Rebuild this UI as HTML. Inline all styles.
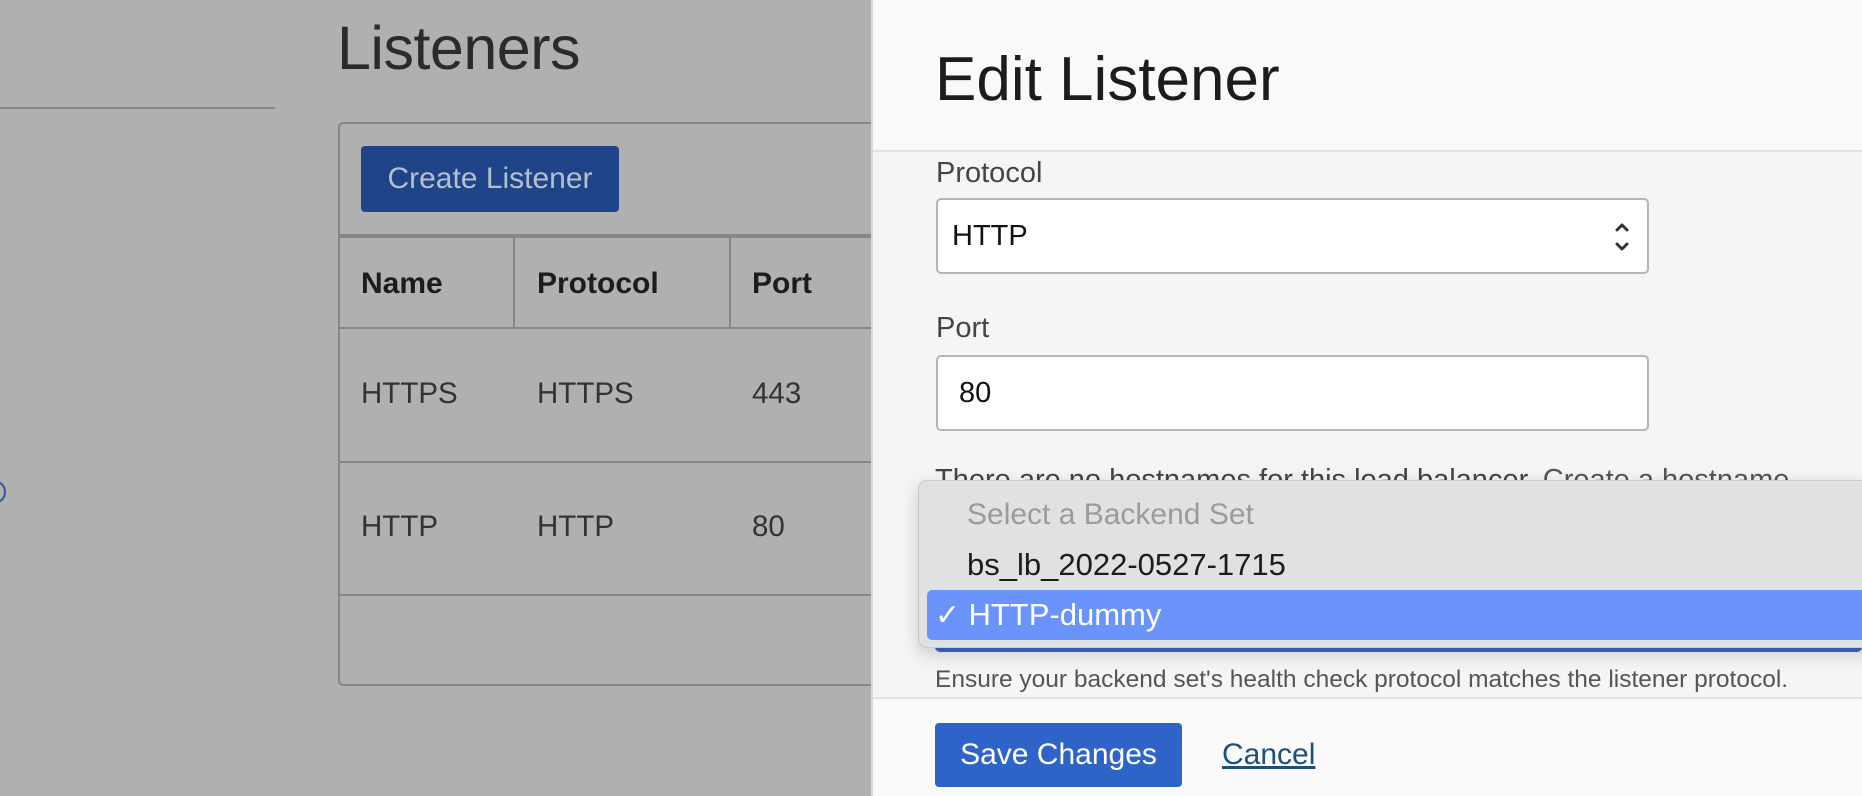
<!DOCTYPE html>
<html><head><style>
*{margin:0;padding:0;box-sizing:border-box}
body{width:1862px;height:796px;overflow:hidden;position:relative;font-family:"Liberation Sans",sans-serif;background:#b0b0b0}
.a{position:absolute;white-space:nowrap}
</style></head><body>
<div class="a" style="left:0;top:0;width:871px;height:796px;background:#b0b0b0"></div>
<div class="a" style="left:337px;top:13px;font-size:61px;color:#2b2b2b;line-height:70px;letter-spacing:-0.5px">Listeners</div>
<div class="a" style="left:0;top:107px;width:275px;height:2px;background:#85858a"></div>
<div class="a" style="left:-18px;top:480px;width:24px;height:24px;border:2px solid #2d55a8;border-radius:50%"></div>
<div class="a" style="left:338px;top:122px;width:560px;height:564px;border:2px solid #85858a;border-radius:5px"></div>
<div class="a" style="left:361px;top:146px;width:258px;height:66px;background:#1f4588;border-radius:4px;color:#b5bfcf;font-size:30px;line-height:66px;text-align:center">Create Listener</div>
<div class="a" style="left:338px;top:234px;width:533px;height:4px;background:#85858a"></div>
<div class="a" style="left:513px;top:236px;width:2px;height:92px;background:#85858a"></div>
<div class="a" style="left:729px;top:236px;width:2px;height:92px;background:#85858a"></div>
<div class="a" style="left:338px;top:327px;width:533px;height:2px;background:#85858a"></div>
<div class="a" style="left:338px;top:461px;width:533px;height:2px;background:#85858a"></div>
<div class="a" style="left:338px;top:594px;width:533px;height:2px;background:#85858a"></div>
<div class="a" style="left:361px;top:264px;font-size:30px;font-weight:bold;color:#1c1c1c;line-height:40px">Name</div>
<div class="a" style="left:537px;top:264px;font-size:30px;font-weight:bold;color:#1c1c1c;line-height:40px">Protocol</div>
<div class="a" style="left:752px;top:264px;font-size:30px;font-weight:bold;color:#1c1c1c;line-height:40px">Port</div>
<div class="a" style="left:361px;top:374px;font-size:29.5px;color:#333;line-height:40px">HTTPS</div>
<div class="a" style="left:537px;top:374px;font-size:29.5px;color:#333;line-height:40px">HTTPS</div>
<div class="a" style="left:752px;top:374px;font-size:29.5px;color:#333;line-height:40px">443</div>
<div class="a" style="left:361px;top:507px;font-size:29.5px;color:#333;line-height:40px">HTTP</div>
<div class="a" style="left:537px;top:507px;font-size:29.5px;color:#333;line-height:40px">HTTP</div>
<div class="a" style="left:752px;top:507px;font-size:29.5px;color:#333;line-height:40px">80</div>
<div class="a" style="left:871px;top:0;width:991px;height:796px;background:#f5f5f5;border-left:2px solid #d8d8d8"></div>
<div class="a" style="left:873px;top:0;width:989px;height:152px;background:#f9f9f9;border-bottom:2px solid #e2e2e2"></div>
<div class="a" style="left:935px;top:42px;font-size:62px;color:#1c1c1c;line-height:76px">Edit Listener</div>
<div class="a" style="left:936px;top:156px;font-size:29px;color:#444;line-height:34px">Protocol</div>
<div class="a" style="left:936px;top:198px;width:713px;height:76px;background:#fff;border:2px solid #b5b5b8;border-radius:5px"></div>
<div class="a" style="left:952px;top:218px;font-size:29px;color:#111;line-height:36px">HTTP</div>
<svg class="a" style="left:1612px;top:220px" width="20" height="34" viewBox="0 0 20 34"><path d="M5 10 L10 5 L15 10 M5 24 L10 29 L15 24" fill="none" stroke="#333" stroke-width="3" stroke-linecap="round" stroke-linejoin="round"/></svg>
<div class="a" style="left:936px;top:311px;font-size:29px;color:#444;line-height:34px">Port</div>
<div class="a" style="left:936px;top:355px;width:713px;height:76px;background:#fff;border:2px solid #b5b5b8;border-radius:5px"></div>
<div class="a" style="left:959px;top:375px;font-size:29px;color:#111;line-height:36px">80</div>
<div class="a" style="left:935px;top:463px;font-size:29px;color:#444;line-height:34px">There are no hostnames for this load balancer. <span style="color:#555">Create a hostname</span></div>
<div class="a" style="left:935px;top:600px;width:927px;height:52px;background:#3a68cc;border-radius:5px"></div>
<div class="a" style="left:918px;top:480px;width:960px;height:168px;background:#e0e1e3;border:1px solid #c8c8cc;border-radius:9px;box-shadow:0 6px 18px rgba(0,0,0,.18)"></div>
<div class="a" style="left:967px;top:497px;font-size:30px;color:#9b9b9e;line-height:36px">Select a Backend Set</div>
<div class="a" style="left:967px;top:547px;font-size:31px;color:#1c1c1c;line-height:36px">bs_lb_2022-0527-1715</div>
<div class="a" style="left:927px;top:590px;width:935px;height:50px;background:#6a94fb;border-radius:5px 0 0 5px"></div>
<div class="a" style="left:935px;top:597px;font-size:30px;color:#fff;line-height:36px">✓ <span style="font-size:31px">HTTP-dummy</span></div>
<div class="a" style="left:935px;top:665px;font-size:24.5px;color:#555;line-height:30px">Ensure your backend set's health check protocol matches the listener protocol.</div>
<div class="a" style="left:873px;top:697px;width:989px;height:99px;background:#fafafa;border-top:2px solid #e2e2e2"></div>
<div class="a" style="left:935px;top:723px;width:247px;height:64px;background:#2e63c8;border-radius:4px;color:#fff;font-size:30px;line-height:64px;text-align:center">Save Changes</div>
<div class="a" style="left:1222px;top:737px;font-size:30px;color:#1e4f7a;line-height:36px;text-decoration:underline">Cancel</div>
</body></html>
